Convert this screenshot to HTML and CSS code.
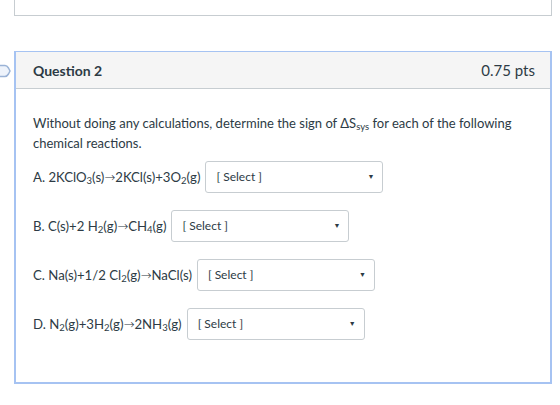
FILE: index.html
```html
<!DOCTYPE html>
<html lang="en">
<head>
    <meta charset="UTF-8">
    <title>Question 2</title>
    <link rel="stylesheet" href="styles.css">
</head>
<body>
<div class="page">
    <div class="prev-box"></div>

    <div class="question">
        <svg class="flag" width="12" height="14" viewBox="0 0 12 14">
            <path d="M-4 1.5 H5 Q7 1.5 8.5 4 L10 7 L8.5 10 Q7 12.5 5 12.5 H-4" fill="#eef3fb" stroke="#9bb3d6" stroke-width="1.5"/>
        </svg>
        <div class="question-header">
            <span class="title">Question 2</span>
            <span class="pts">0.75 pts</span>
        </div>
        <div class="question-body">
            <p class="prompt">Without doing any calculations, determine the sign of &Delta;S<sub>sys</sub> for each of the following chemical reactions.</p>

            <div class="row">
                <span class="eq">A. 2KClO<sub>3</sub>(s)<span class="to">&rarr;</span>2KCl(s)+3O<sub>2</sub>(g)</span>
                <div class="select"><span>[ Select ]</span><span class="arrow">&#9660;</span></div>
            </div>
            <div class="row">
                <span class="eq">B. C(s)+2 H<sub>2</sub>(g)<span class="to">&rarr;</span>CH<sub>4</sub>(g)</span>
                <div class="select"><span>[ Select ]</span><span class="arrow">&#9660;</span></div>
            </div>
            <div class="row">
                <span class="eq">C. Na(s)+1/2 Cl<sub>2</sub>(g)<span class="to">&rarr;</span>NaCl(s)</span>
                <div class="select"><span>[ Select ]</span><span class="arrow">&#9660;</span></div>
            </div>
            <div class="row">
                <span class="eq">D. N<sub>2</sub>(g)+3H<sub>2</sub>(g)<span class="to">&rarr;</span>2NH<sub>3</sub>(g)</span>
                <div class="select"><span>[ Select ]</span><span class="arrow">&#9660;</span></div>
            </div>
        </div>
    </div>
</div>
</body>
</html>
```

FILE: styles.css
```css
body {
    margin: 0;
    font-family: Lato, "Open Sans", sans-serif;
    color: #2d3b45;
    background: #ffffff;
}

.page {
    padding: 0 8px 0 14px;
}

.prev-box {
    height: 15px;
    border: 1px solid #c7cdd1;
    border-top: none;
}

.question {
    position: relative;
    margin-top: 35px;
    border: 2px solid #a6c3f2;
    border-top-width: 1px;
    height: 330px;
}

.flag {
    position: absolute;
    left: -16px;
    top: 12px;
}

.question-header {
    display: flex;
    justify-content: space-between;
    align-items: center;
    height: 36px;
    padding: 0 15px 0 17px;
    background: #f5f5f5;
    border-bottom: 1px solid #c7cdd1;
}

.title {
    font-size: 14px;
    font-weight: bold;
}

.pts {
    font-size: 15px;
}

.question-body {
    padding: 24px 17px 0 17px;
}

.prompt {
    margin: 0 0 9px 0;
    font-size: 13px;
    line-height: 20px;
}

sub {
    font-size: 9.5px;
    line-height: 0;
    vertical-align: -2px;
}

.to {
    font-family: "DejaVu Sans", sans-serif;
    font-size: 13px;
    font-weight: 200;
}

.row {
    display: flex;
    align-items: center;
    height: 30px;
    margin-bottom: 19px;
    font-size: 13.2px;
}

.eq {
    margin-right: 5px;
}

.select {
    display: flex;
    justify-content: space-between;
    align-items: center;
    width: 158px;
    height: 28px;
    padding: 0 8px 2px 10px;
    border: 1px solid #c7cdd1;
    border-radius: 3px;
    font-size: 12px;
    background: #ffffff;
}

.arrow {
    font-size: 7px;
    color: #2d3b45;
}
```
